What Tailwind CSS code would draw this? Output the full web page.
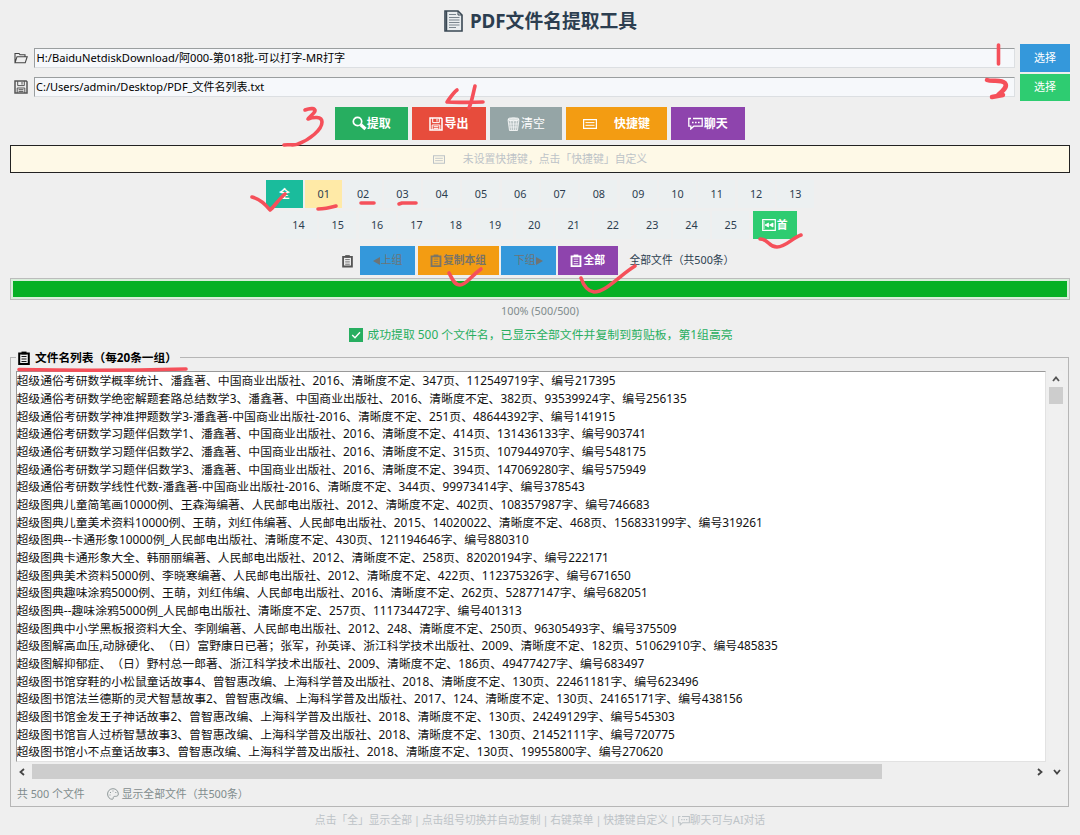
<!DOCTYPE html>
<html lang="zh-CN">
<head>
    <meta charset="UTF-8">
    <title>PDF文件名提取工具</title>
    <script src="https://cdn.jsdelivr.net/npm/@tailwindcss/browser@4"></script>
</head>
<body class="relative w-[1080px] h-[835px] overflow-hidden bg-[#efefef] px-[10px] font-['Noto_Sans','Noto_Sans_CJK_SC',sans-serif] text-[11.4px] text-[#2c3e50] whitespace-nowrap [text-spacing-trim:space-all]">

<!-- Icons -->
<svg class="hidden">
    <symbol id="clip" viewBox="0 0 12 14">
        <path d="M1.200 2.500h9.600v10.500H1.200z" fill="none" stroke="currentColor" stroke-width="2"/>
        <path d="M3.500.600h5v2.800h-5z" fill="currentColor"/>
        <path d="M3.500 5.500h5M3.500 8h5M3.500 10.500h5" stroke="currentColor" stroke-width=".9"/>
    </symbol>
    <symbol id="floppy" viewBox="0 0 14 14">
        <path d="M1 1h11.200l.8.8V13H1z" fill="none" stroke="currentColor" stroke-width="1.500"/>
        <path d="M3.700 1v4.600h6.600V1M3.200 13V8h7.600v5" fill="none" stroke="currentColor"/>
        <path d="M8 2v2.600M4.600 9.700h4.800M4.600 11.400h4.800" stroke="currentColor"/>
    </symbol>
    <symbol id="keyboard" viewBox="0 0 14 10">
        <path d="M.6.600h12.800v8.800H.6z" fill="none" stroke="currentColor" stroke-width="1.200"/>
        <path d="M2.500 3.600h9M2.500 6.300h9" stroke="currentColor"/>
    </symbol>
    <symbol id="chat" viewBox="0 0 15 13">
        <path d="M3 1.500H.8v7.700h2V12l3-2.800h8.400V1.500H5" fill="none" stroke="currentColor" stroke-width="1.300"/>
        <path d="M4 5.400h1.600M7 5.400h1.600M10 5.400h1.600" stroke="currentColor" stroke-width="1.500"/>
    </symbol>
</svg>

<!-- Title -->
<h1 class="h-[44px] pb-[2px] pl-[1px] flex items-center justify-center gap-[7px] text-[18.800px] font-bold">
    <svg class="w-[19px] h-[22px]" viewBox="0 0 19 22">
        <path d="M1 1h13l4 4v16H1z" fill="#e9edef" stroke="#3a4854" stroke-width="1.600"/>
        <path d="M2.500 1v20" stroke="#3a4854" stroke-width="1.500"/>
        <path d="M14 1v4h4" fill="none" stroke="#3a4854"/>
        <path d="M5 4.500h7M5 7.500h10.500M5 10h10.500M5 12.500h10.500M5 15h10.500M5 17.500h7" stroke="#7a858e"/>
    </svg>
    <span>PDF文件名提取工具</span>
</h1>

<!-- Paths -->
<div class="space-y-[2px]">
    <div class="h-[27.500px] flex items-center">
        <svg class="ml-[4px] mr-[6px] w-[14px] h-[12px]" viewBox="0 0 14 12"><path d="M1 10.500V1.500h4l1 1.200h5v2M1 10.800 3 4.700h10.200l-2 6.100z" fill="none" stroke="#444" stroke-width="1.100"/></svg>
        <div class="w-[981px] h-[20px] px-[1.500px] pt-[1px] flex items-center bg-[#f6f8fb] border border-[#dcdfe2] border-t-[#9a9e9f] border-l-[#9a9e9f] text-[11.150px] text-black">H:/BaiduNetdiskDownload/阿000-第018批-可以打字-MR打字</div>
        <button class="ml-auto w-[50px] h-full bg-[#3498db] text-white text-[11px]">选择</button>
    </div>
    <div class="h-[27.500px] flex items-center">
        <svg class="ml-[4px] mr-[6px] w-[14px] h-[14px] text-[#555]"><use href="#floppy"/></svg>
        <div class="w-[981px] h-[20px] px-[1px] flex items-center bg-[#f6f8fb] border border-[#dcdfe2] border-t-[#9a9e9f] border-l-[#9a9e9f] text-[11px] text-black">C:/Users/admin/Desktop/PDF_文件名列表.txt</div>
        <button class="ml-auto w-[50px] h-full bg-[#2ecc71] text-white text-[11px]">选择</button>
    </div>
</div>

<!-- Toolbar -->
<div class="mt-[6px] h-[33px] flex justify-center gap-[4px] pr-[1px] text-[12px] font-bold text-white">
    <button class="w-[73.500px] bg-[#27ae60] flex items-center justify-center">
        <svg class="w-[15px] h-[15px]" viewBox="0 0 15 15"><circle cx="5.500" cy="5.500" r="4.200" fill="none" stroke="#fff" stroke-width="1.700"/><path d="m8.800 8.800 4.700 4.200" stroke="#fff" stroke-width="3.400"/></svg>提取
    </button>
    <button class="w-[74px] bg-[#e74c3c] flex items-center justify-center gap-[1px]"><svg class="w-[14px] h-[14px]"><use href="#floppy"/></svg>导出</button>
    <button class="w-[72px] bg-[#95a5a6] flex items-center justify-center gap-[1px] font-normal">
        <svg class="w-[13px] h-[14px]" viewBox="0 0 13 14"><path d="M1 2.500h11l-1.500 11h-8z" fill="#fff" fill-opacity=".35" stroke="#fff" stroke-opacity=".8"/><ellipse cx="6.500" cy="2.300" rx="5.500" ry="1.500" fill="#dde3e3" stroke="#fff" stroke-opacity=".8"/><path d="m3.500 4 1 9M6.500 4v9m3-9-1 9M2 7h9M2.500 10h8" stroke="#fff" stroke-width=".6"/></svg>清空
    </button>
    <button class="w-[101px] bg-[#f39c12] flex items-center justify-center gap-[17px]"><svg class="w-[14px] h-[10px]"><use href="#keyboard"/></svg>快捷键</button>
    <button class="w-[73.500px] bg-[#8e44ad] flex items-center justify-center gap-[1px]"><svg class="w-[15px] h-[13px]"><use href="#chat"/></svg>聊天</button>
</div>

<!-- Hotkey bar -->
<div class="mt-[5px] h-[28px] border border-[#222] bg-[#fef9e7] flex items-center justify-center gap-[18px] text-[10.850px] text-[#bdc3c7]">
    <svg class="w-[12px] h-[9px]"><use href="#keyboard"/></svg>
    <span>未设置快捷键，点击「快捷键」自定义</span>
</div>

<!-- Groups -->
<div class="mt-[7px] ml-[256px] h-[27.500px] flex gap-[2.300px] text-[10.800px] text-center leading-[27px]">
    <button class="w-[37px] bg-[#1abc9c] text-white font-bold">全</button>
    <button class="w-[37px] bg-[#ffeaa7]">01</button>
    <button class="w-[37px] bg-[#ecf0f1]">02</button>
    <button class="w-[37px] bg-[#ecf0f1]">03</button>
    <button class="w-[37px] bg-[#ecf0f1]">04</button>
    <button class="w-[37px] bg-[#ecf0f1]">05</button>
    <button class="w-[37px] bg-[#ecf0f1]">06</button>
    <button class="w-[37px] bg-[#ecf0f1]">07</button>
    <button class="w-[37px] bg-[#ecf0f1]">08</button>
    <button class="w-[37px] bg-[#ecf0f1]">09</button>
    <button class="w-[37px] bg-[#ecf0f1]">10</button>
    <button class="w-[37px] bg-[#ecf0f1]">11</button>
    <button class="w-[37px] bg-[#ecf0f1]">12</button>
    <button class="w-[37px] bg-[#ecf0f1]">13</button>
</div>
<div class="mt-[3.500px] ml-[270px] h-[27.500px] flex gap-[2.300px] text-[10.800px] text-center leading-[27px]">
    <button class="w-[37px] bg-[#ecf0f1]">14</button>
    <button class="w-[37px] bg-[#ecf0f1]">15</button>
    <button class="w-[37px] bg-[#ecf0f1]">16</button>
    <button class="w-[37px] bg-[#ecf0f1]">17</button>
    <button class="w-[37px] bg-[#ecf0f1]">18</button>
    <button class="w-[37px] bg-[#ecf0f1]">19</button>
    <button class="w-[37px] bg-[#ecf0f1]">20</button>
    <button class="w-[37px] bg-[#ecf0f1]">21</button>
    <button class="w-[37px] bg-[#ecf0f1]">22</button>
    <button class="w-[37px] bg-[#ecf0f1]">23</button>
    <button class="w-[37px] bg-[#ecf0f1]">24</button>
    <button class="w-[37px] bg-[#ecf0f1]">25</button>
    <button class="ml-[1px] w-[44px] bg-[#2ecc71] text-white font-bold flex items-center justify-center gap-[1px]">
        <svg class="w-[14px] h-[12px]" viewBox="0 0 14 12"><path d="M.7.700h12.600v10.600H.7z" fill="none" stroke="#fff" stroke-width="1.200"/><path d="M2 2v8M3 6l3.500-2v4zM7.500 6 11 4v4z" fill="#fff" stroke="#fff" stroke-width=".8"/></svg>首
    </button>
</div>

<!-- Copy bar -->
<div class="mt-[7.500px] ml-[332px] h-[29px] flex items-center text-[10.800px] font-bold">
    <svg class="w-[11px] h-[14px] mr-[7px] text-[#555]"><use href="#clip"/></svg>
    <button class="w-[55px] h-full mr-[2.500px] bg-[#3498db] text-[#6d7475] font-normal flex items-center justify-center gap-[1px]"><svg class="w-[7px] h-[8px]" viewBox="0 0 7 8"><path d="M7 0v8L0 4z" fill="currentColor"/></svg>上组</button>
    <button class="w-[81px] h-full mr-[2.500px] bg-[#f39c12] text-[#7a7467] flex items-center justify-center gap-[1px]"><svg class="w-[12px] h-[13px]"><use href="#clip"/></svg>复制本组</button>
    <button class="w-[54.500px] h-full mr-[2.500px] bg-[#3498db] text-[#6d7475] font-normal flex items-center justify-center">下组<svg class="w-[7px] h-[8px]" viewBox="0 0 7 8"><path d="M0 0v8l7-4z" fill="currentColor"/></svg></button>
    <button class="w-[59.500px] h-full bg-[#8e44ad] text-white flex items-center justify-center gap-[1px]"><svg class="w-[12px] h-[13px]"><use href="#clip"/></svg>全部</button>
    <span class="ml-[12px] font-normal">全部文件（共500条）</span>
</div>

<!-- Progress -->
<div class="mt-[3px] h-[21.500px] border border-[#bcbcbc] bg-[#d9eedb] p-[2px]">
    <div class="h-full bg-[#06b025]"></div>
</div>
<div class="h-[22px] leading-[21px] text-center text-[10.800px] text-[#7f8c8d]">100% (500/500)</div>
<div class="h-[27px] pl-[2px] flex items-center justify-center gap-[4px] text-[11.870px] text-[#27ae60]">
    <svg class="w-[14px] h-[14px]" viewBox="0 0 14 14"><path d="M0 0h14v14H0z" fill="#27ae60"/><path d="m3.200 7 2.800 2.800 5-5.600" fill="none" stroke="#fff" stroke-width="1.400"/></svg>
    <span>成功提取 500 个文件名，已显示全部文件并复制到剪贴板，第1组高亮</span>
</div>

<!-- File list -->
<div class="mt-[8.500px] h-[450px] w-[1059px] border border-[#b6b6b6] px-[5px]">
    <div class="relative -mt-[9px] w-[164px] h-[18px] bg-[#efefef] flex items-center gap-[5px] pl-[2px] text-[11.700px] font-bold text-black">
        <svg class="w-[12px] h-[14px]"><use href="#clip"/></svg>文件名列表（每20条一组）
    </div>
    <div class="mt-[4px] flex">
        <div class="w-[1032px] h-[391px] -indent-[.5px] overflow-hidden bg-white border border-[#e2e2e2] border-t-[#999] border-l-[#999] text-[11.850px] leading-[17.670px] text-[#111]">
            <div class="mt-[.3px]">超级通俗考研数学概率统计、潘鑫著、中国商业出版社、2016、清晰度不定、347页、112549719字、编号217395</div>
            <div>超级通俗考研数学绝密解题套路总结数学3、潘鑫著、中国商业出版社、2016、清晰度不定、382页、93539924字、编号256135</div>
            <div>超级通俗考研数学神准押题数学3-潘鑫著-中国商业出版社-2016、清晰度不定、251页、48644392字、编号141915</div>
            <div>超级通俗考研数学习题伴侣数学1、潘鑫著、中国商业出版社、2016、清晰度不定、414页、131436133字、编号903741</div>
            <div>超级通俗考研数学习题伴侣数学2、潘鑫著、中国商业出版社、2016、清晰度不定、315页、107944970字、编号548175</div>
            <div>超级通俗考研数学习题伴侣数学3、潘鑫著、中国商业出版社、2016、清晰度不定、394页、147069280字、编号575949</div>
            <div>超级通俗考研数学线性代数-潘鑫著-中国商业出版社-2016、清晰度不定、344页、99973414字、编号378543</div>
            <div>超级图典儿童简笔画10000例、王森海编著、人民邮电出版社、2012、清晰度不定、402页、108357987字、编号746683</div>
            <div>超级图典儿童美术资料10000例、王萌，刘红伟编著、人民邮电出版社、2015、14020022、清晰度不定、468页、156833199字、编号319261</div>
            <div>超级图典--卡通形象10000例_人民邮电出版社、清晰度不定、430页、121194646字、编号880310</div>
            <div>超级图典卡通形象大全、韩丽丽编著、人民邮电出版社、2012、清晰度不定、258页、82020194字、编号222171</div>
            <div>超级图典美术资料5000例、李晓寒编著、人民邮电出版社、2012、清晰度不定、422页、112375326字、编号671650</div>
            <div>超级图典趣味涂鸦5000例、王萌，刘红伟编、人民邮电出版社、2016、清晰度不定、262页、52877147字、编号682051</div>
            <div>超级图典--趣味涂鸦5000例_人民邮电出版社、清晰度不定、257页、111734472字、编号401313</div>
            <div>超级图典中小学黑板报资料大全、李刚编著、人民邮电出版社、2012、248、清晰度不定、250页、96305493字、编号375509</div>
            <div>超级图解高血压,动脉硬化、（日）富野康日已著；张军，孙英译、浙江科学技术出版社、2009、清晰度不定、182页、51062910字、编号485835</div>
            <div>超级图解抑郁症、（日）野村总一郎著、浙江科学技术出版社、2009、清晰度不定、186页、49477427字、编号683497</div>
            <div>超级图书馆穿鞋的小松鼠童话故事4、曾智惠改编、上海科学普及出版社、2018、清晰度不定、130页、22461181字、编号623496</div>
            <div>超级图书馆法兰德斯的灵犬智慧故事2、曾智惠改编、上海科学普及出版社、2017、124、清晰度不定、130页、24165171字、编号438156</div>
            <div>超级图书馆金发王子神话故事2、曾智惠改编、上海科学普及出版社、2018、清晰度不定、130页、24249129字、编号545303</div>
            <div>超级图书馆盲人过桥智慧故事3、曾智惠改编、上海科学普及出版社、2018、清晰度不定、130页、21452111字、编号720775</div>
            <div>超级图书馆小不点童话故事3、曾智惠改编、上海科学普及出版社、2018、清晰度不定、130页、19955800字、编号270620</div>
        </div>
        <div class="ml-[3px] w-[14px] flex flex-col items-center bg-[#f0f0f0]">
            <svg class="mt-[5px] w-[8px] h-[6px]" viewBox="0 0 8 6"><path d="m1 5 3-3.500L7 5" fill="none" stroke="#555" stroke-width="1.800"/></svg>
            <div class="mt-[5px] w-full h-[17px] bg-[#cdcdcd]"></div>
        </div>
    </div>
    <div class="mt-[2px] h-[15px] flex items-center">
        <svg class="ml-[3px] w-[6px] h-[8px]" viewBox="0 0 6 8"><path d="M5 1 1.500 4 5 7" fill="none" stroke="#444" stroke-width="1.800"/></svg>
        <div class="ml-[7px] w-[850px] h-full bg-[#cdcdcd]"></div>
        <svg class="ml-[155px] w-[6px] h-[8px]" viewBox="0 0 6 8"><path d="m1 1 3.500 3L1 7" fill="none" stroke="#444" stroke-width="1.800"/></svg>
        <svg class="ml-[10px] w-[8px] h-[6px]" viewBox="0 0 8 6"><path d="m1 1 3 3.500L7 1" fill="none" stroke="#444" stroke-width="1.800"/></svg>
    </div>
    <div class="mt-[5.500px] h-[19px] pl-[1px] flex items-center text-[10.850px] text-[#7f8c8d]">
        <span>共 500 个文件</span>
        <svg class="ml-[22px] mr-[3px] w-[12px] h-[12px]" viewBox="0 0 12 12" fill="none" stroke="#8f999a"><path d="M6 .700C2.800.700.600 3 .600 6s2 5.300 4.700 5.300c1.500 0 .4-2 1.500-2.700 1-.6 4.500.6 4.500-2.600C11.300 3 9 .700 6 .700z"/><path d="M3 4.500h1M5.500 3h1M8.300 4.500h1M2.500 7h1"/></svg>
        <span>显示全部文件（共500条）</span>
    </div>
</div>

<!-- Footer -->
<div class="h-[26px] flex items-center justify-center text-[10.800px] [word-spacing:-.9px] text-[#bdc3c7]">
    点击「全」显示全部 | 点击组号切换并自动复制 | 右键菜单 | 快捷键自定义 |&nbsp;<svg class="w-[12px] h-[11px]"><use href="#chat"/></svg>聊天可与AI对话
</div>

<!-- Pen marks -->
<svg class="absolute left-0 top-0 w-[1080px] h-[835px] pointer-events-none" viewBox="0 0 1080 835" fill="none" stroke="#f5505a" stroke-width="3.600" stroke-linecap="round" stroke-linejoin="round">
    <path d="M998.500 45v19"/>
    <path d="M987 80c5 2 14-1 18 3 3 4-2 8-7 12M992 97l11-2" stroke-width="4.500"/>
    <path d="M305 110c5-2 11-2 10 1s-6 6-7 8c5-2 14-3 14 3 0 8-13 18-24 22-4 2-9 0-14 1"/>
    <path d="M457 90c-4 3-7 8-10 12 12 1 24 0 36 0M475 86c-2 8-3 15-6 22"/>
    <path d="M252 197c8 2 14 8 18 13 4-3 8-10 15-16"/>
    <path d="M318 209c6 0 11-1 18-3M361 203h13M399 204l3-1h14"/>
    <path d="M760 239c9 0 8 8 17 8s15-9 24-12"/>
    <path d="M449 273c3 5 5 12 11 12s10-8 21-16"/>
    <path d="M581 278c2 6 6 13 13 14 12 0 26-17 41-26"/>
    <path d="M19 369.500c52 1 108 1 167-.500"/>
</svg>

</body>
</html>
